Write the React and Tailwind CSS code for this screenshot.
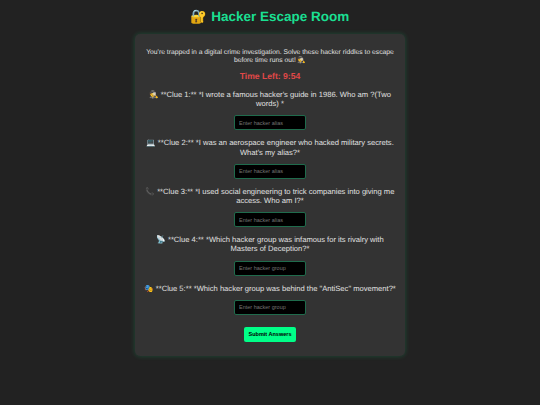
const clues = [
  { text: `🕵️ **Clue 1:** *I wrote a famous hacker's guide in 1986. Who am ?(Two words) *`, ph: "Enter hacker alias" },
  { text: `💻 **Clue 2:** *I was an aerospace engineer who hacked military secrets. What's my alias?*`, ph: "Enter hacker alias" },
  { text: `📞 **Clue 3:** *I used social engineering to trick companies into giving me access. Who am I?*`, ph: "Enter hacker alias" },
  { text: `📡 **Clue 4:** *Which hacker group was infamous for its rivalry with Masters of Deception?*`, ph: "Enter hacker group" },
  { text: `🎭 **Clue 5:** *Which hacker group was behind the "AntiSec" movement?*`, ph: "Enter hacker group" },
];

export default function App() {
  return (
    <div className="min-h-[405px] bg-[#222222] flex flex-col items-center text-center antialiased [text-rendering:geometricPrecision] font-['Liberation_Sans','Noto_Color_Emoji',sans-serif]">
      <h1 className="mt-[8px] text-[13.5px] leading-[18px] font-bold text-[#1adf91]">🔐 Hacker Escape Room</h1>
      <div className="mt-[8px] w-[270px] h-[322px] rounded-[5px] bg-[#333333] shadow-[0_0_5px_rgba(0,255,136,0.2)] px-[8px] pt-[15px] flex flex-col items-center">
        <p className="px-[2px] text-[6.75px] leading-[8px] text-[#e0e0e0]">You're trapped in a digital crime investigation. Solve these hacker riddles to escape before time runs out! 🕵️</p>
        <p className="mt-[6px] text-[8.6px] leading-[11px] font-bold text-[#e04848]">Time Left: 9:54</p>
        {clues.map((c, i) => (
          <div key={i} className="flex flex-col items-center">
            <p className="mt-[8px] text-[7.6px] leading-[9.2px] text-[#e0e0e0]">{c.text}</p>
            <input
              placeholder={c.ph}
              className="mt-[7px] w-[72px] h-[15px] rounded-[2px] bg-black border border-[#1f6b4c] px-[4px] text-[5.5px] text-[#e0e0e0] placeholder:text-[#757575] outline-none"
            />
          </div>
        ))}
        <button className="mt-[12px] w-[52px] h-[15px] rounded-[2px] bg-[#00ff88] text-[5.5px] font-bold text-black">Submit Answers</button>
      </div>
    </div>
  );
}
